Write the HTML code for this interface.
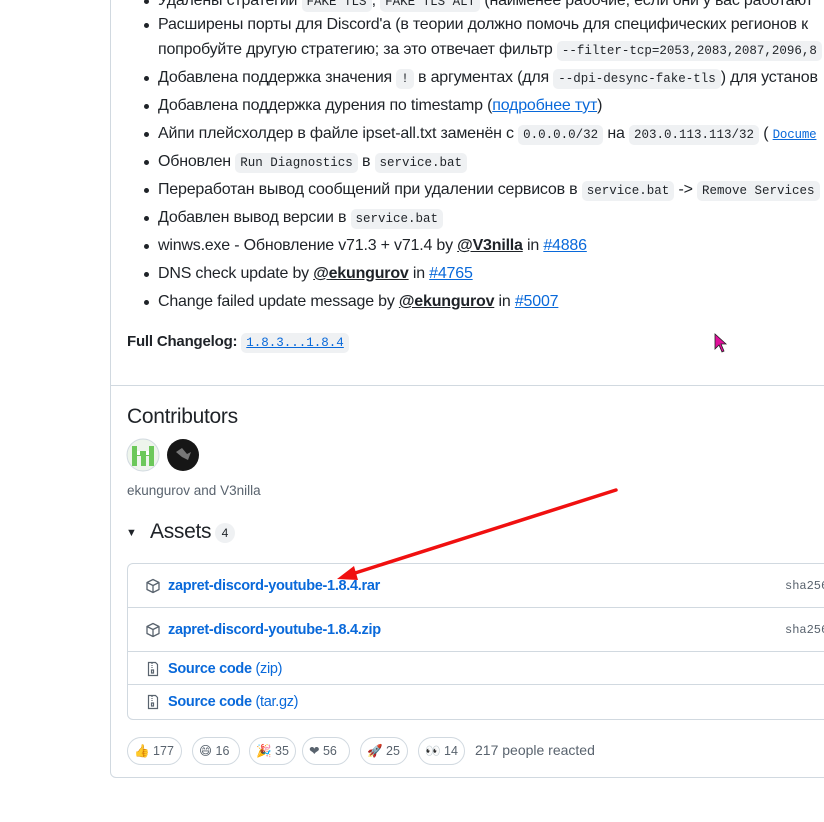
<!DOCTYPE html>
<html><head><meta charset="utf-8"><style>
*{margin:0;padding:0;box-sizing:border-box}
body{width:824px;height:822px;overflow:hidden;background:#fff;font-family:"Liberation Sans","DejaVu Sans",sans-serif;color:#1f2328;position:relative}
.card{position:absolute;left:110px;top:-10px;width:730px;height:788px;border:1px solid #d1d9e0;border-radius:6px}
.l{position:absolute;left:158px;font-size:16px;white-space:nowrap;line-height:20px;letter-spacing:-0.2px}
.l:before{content:"";position:absolute;left:-14px;top:8px;width:5px;height:5px;border-radius:50%;background:#1f2328}
.nb:before{display:none}
code{font-family:"Liberation Mono",monospace;font-size:12.5px;background:#eff1f3;border-radius:5px;padding:3px 5px;letter-spacing:0}
a{color:#0969da;text-decoration:underline}
b.u{text-decoration:underline;font-weight:bold}
.sep{position:absolute;left:111px;right:0;top:385px;border-top:1px solid #d1d9e0}
.box{position:absolute;left:127px;top:563px;width:720px;height:157px;border:1px solid #d1d9e0;border-radius:6px}
.row{position:absolute;left:0;right:0;border-top:1px solid #d1d9e0}
.an{position:absolute;left:40px;font-size:14.5px;font-weight:bold;color:#0969da;letter-spacing:-0.3px}
.sha{position:absolute;left:657px;font-size:12px;color:#59636e;font-family:"Liberation Mono",monospace}
.rx{position:absolute;top:737px;height:28px;border:1px solid #d1d9e0;border-radius:14px;font-size:12.5px;color:#59636e;line-height:26px;padding-left:6px}
</style></head><body>
<div class="card"></div>
<div class="l" style="top:-9px">Удалены стратегии <code>FAKE TLS</code>, <code>FAKE TLS ALT</code> (наименее рабочие, если они у вас работают</div>
<div class="l" style="top:15px">Расширены порты для Discord'a (в теории должно помочь для специфических регионов к</div>
<div class="l nb" style="top:40px">попробуйте другую стратегию; за это отвечает фильтр <code>--filter-tcp=2053,2083,2087,2096,8</code></div>
<div class="l" style="top:68px">Добавлена поддержка значения <code>!</code> в аргументах (для <code>--dpi-desync-fake-tls</code>) для установ</div>
<div class="l" style="top:96px">Добавлена поддержка дурения по timestamp (<a>подробнее тут</a>)</div>
<div class="l" style="top:124px">Айпи плейсхолдер в файле ipset-all.txt заменён с <code>0.0.0.0/32</code> на <code>203.0.113.113/32</code> ( <a style="font-family:'Liberation Mono';font-size:12.5px">Docume</a></div>
<div class="l" style="top:152px">Обновлен <code>Run Diagnostics</code> в <code>service.bat</code></div>
<div class="l" style="top:180px">Переработан вывод сообщений при удалении сервисов в <code>service.bat</code> -&gt; <code>Remove Services</code></div>
<div class="l" style="top:208px">Добавлен вывод версии в <code>service.bat</code></div>
<div class="l" style="top:236px">winws.exe - Обновление v71.3 + v71.4 by <b class="u">@V3nilla</b> in <a>#4886</a></div>
<div class="l" style="top:264px">DNS check update by <b class="u">@ekungurov</b> in <a>#4765</a></div>
<div class="l" style="top:292px">Change failed update message by <b class="u">@ekungurov</b> in <a>#5007</a></div>
<div class="l nb" style="left:127px;top:332px;font-weight:bold;font-size:15px">Full Changelog: <code style="font-weight:normal;color:#0969da;text-decoration:underline">1.8.3...1.8.4</code></div>
<svg style="position:absolute;left:714px;top:333px" width="14" height="20"><path d="M1 1 L1 16 L5 12 L8 19 L10 18 L7 11 L12 11 Z" fill="#e0109a" stroke="#222" stroke-width="0.8"/></svg>
<div class="sep"></div>
<div style="position:absolute;left:127px;top:405px;font-size:21px;letter-spacing:-0.3px">Contributors</div>
<svg style="position:absolute;left:126px;top:438px" width="34" height="34"><circle cx="17" cy="17" r="16" fill="#eef5ec" stroke="#d1d9e0"/><path d="M6 8h5v5h12v-5h5v20h-5v-10h-3v10h-5v-10h-4v10h-5z" fill="#6cc85a"/><rect x="11" y="13" width="3" height="4" fill="#fff"/><rect x="20" y="13" width="3" height="4" fill="#fff"/></svg>
<svg style="position:absolute;left:166px;top:438px" width="34" height="34"><circle cx="17" cy="17" r="16" fill="#161616"/><path d="M10 14l6-4 5 6 4-2-3 8-6-3z" fill="#777"/></svg>
<div style="position:absolute;left:127px;top:483px;font-size:13.5px;color:#59636e">ekungurov and V3nilla</div>
<div style="position:absolute;left:126px;top:527px;font-size:11px">▼</div>
<div style="position:absolute;left:150px;top:520px;font-size:21px;letter-spacing:-0.3px">Assets</div>
<div style="position:absolute;left:215px;top:523px;width:20px;height:20px;border-radius:10px;background:#eff1f3;font-size:12px;text-align:center;line-height:20px">4</div>
<div class="box">
 <svg style="position:absolute;left:17px;top:14px" width="16" height="16" viewBox="0 0 16 16"><path d="M8 1.5 L14 4.5 V11.5 L8 14.5 L2 11.5 V4.5 Z M2 4.5 L8 7.5 L14 4.5 M8 7.5 V14.5" fill="none" stroke="#59636e" stroke-width="1.3" stroke-linejoin="round"/></svg>
 <div class="an" style="top:14px">zapret-discord-youtube-1.8.4.rar</div><div class="sha" style="top:15px">sha256</div>
 <div class="row" style="top:43px"></div>
 <svg style="position:absolute;left:17px;top:58px" width="16" height="16" viewBox="0 0 16 16"><path d="M8 1.5 L14 4.5 V11.5 L8 14.5 L2 11.5 V4.5 Z M2 4.5 L8 7.5 L14 4.5 M8 7.5 V14.5" fill="none" stroke="#59636e" stroke-width="1.3" stroke-linejoin="round"/></svg>
 <div class="an" style="top:58px">zapret-discord-youtube-1.8.4.zip</div><div class="sha" style="top:59px">sha256</div>
 <div class="row" style="top:87px"></div>
 <svg style="position:absolute;left:17px;top:97px" width="16" height="16" viewBox="0 0 16 16"><path d="M3.5 1.5h7l2 2v11h-9z M7 2v1 M7 4v1 M7 6v1 M6.5 9h2v3h-2z" fill="none" stroke="#59636e" stroke-width="1.2"/></svg>
 <div class="an" style="top:97px">Source code <span style="font-weight:normal">(zip)</span></div>
 <div class="row" style="top:120px"></div>
 <svg style="position:absolute;left:17px;top:130px" width="16" height="16" viewBox="0 0 16 16"><path d="M3.5 1.5h7l2 2v11h-9z M7 2v1 M7 4v1 M7 6v1 M6.5 9h2v3h-2z" fill="none" stroke="#59636e" stroke-width="1.2"/></svg>
 <div class="an" style="top:130px">Source code <span style="font-weight:normal">(tar.gz)</span></div>
</div>
<div class="rx" style="left:127px;width:55px">👍 177</div>
<div class="rx" style="left:192px;width:48px">😄 16</div>
<div class="rx" style="left:249px;width:47px">🎉 35</div>
<div class="rx" style="left:302px;width:48px">❤ 56</div>
<div class="rx" style="left:360px;width:48px">🚀 25</div>
<div class="rx" style="left:418px;width:47px">👀 14</div>
<div style="position:absolute;left:475px;top:742px;font-size:14px;color:#59636e">217 people reacted</div>
<svg style="position:absolute;left:0;top:0" width="824" height="822"><line x1="616" y1="490" x2="352" y2="574" stroke="#f01010" stroke-width="3.5" stroke-linecap="round"/><path d="M337 579 L354 566 L358 580 Z" fill="#f01010"/></svg>
</body></html>
